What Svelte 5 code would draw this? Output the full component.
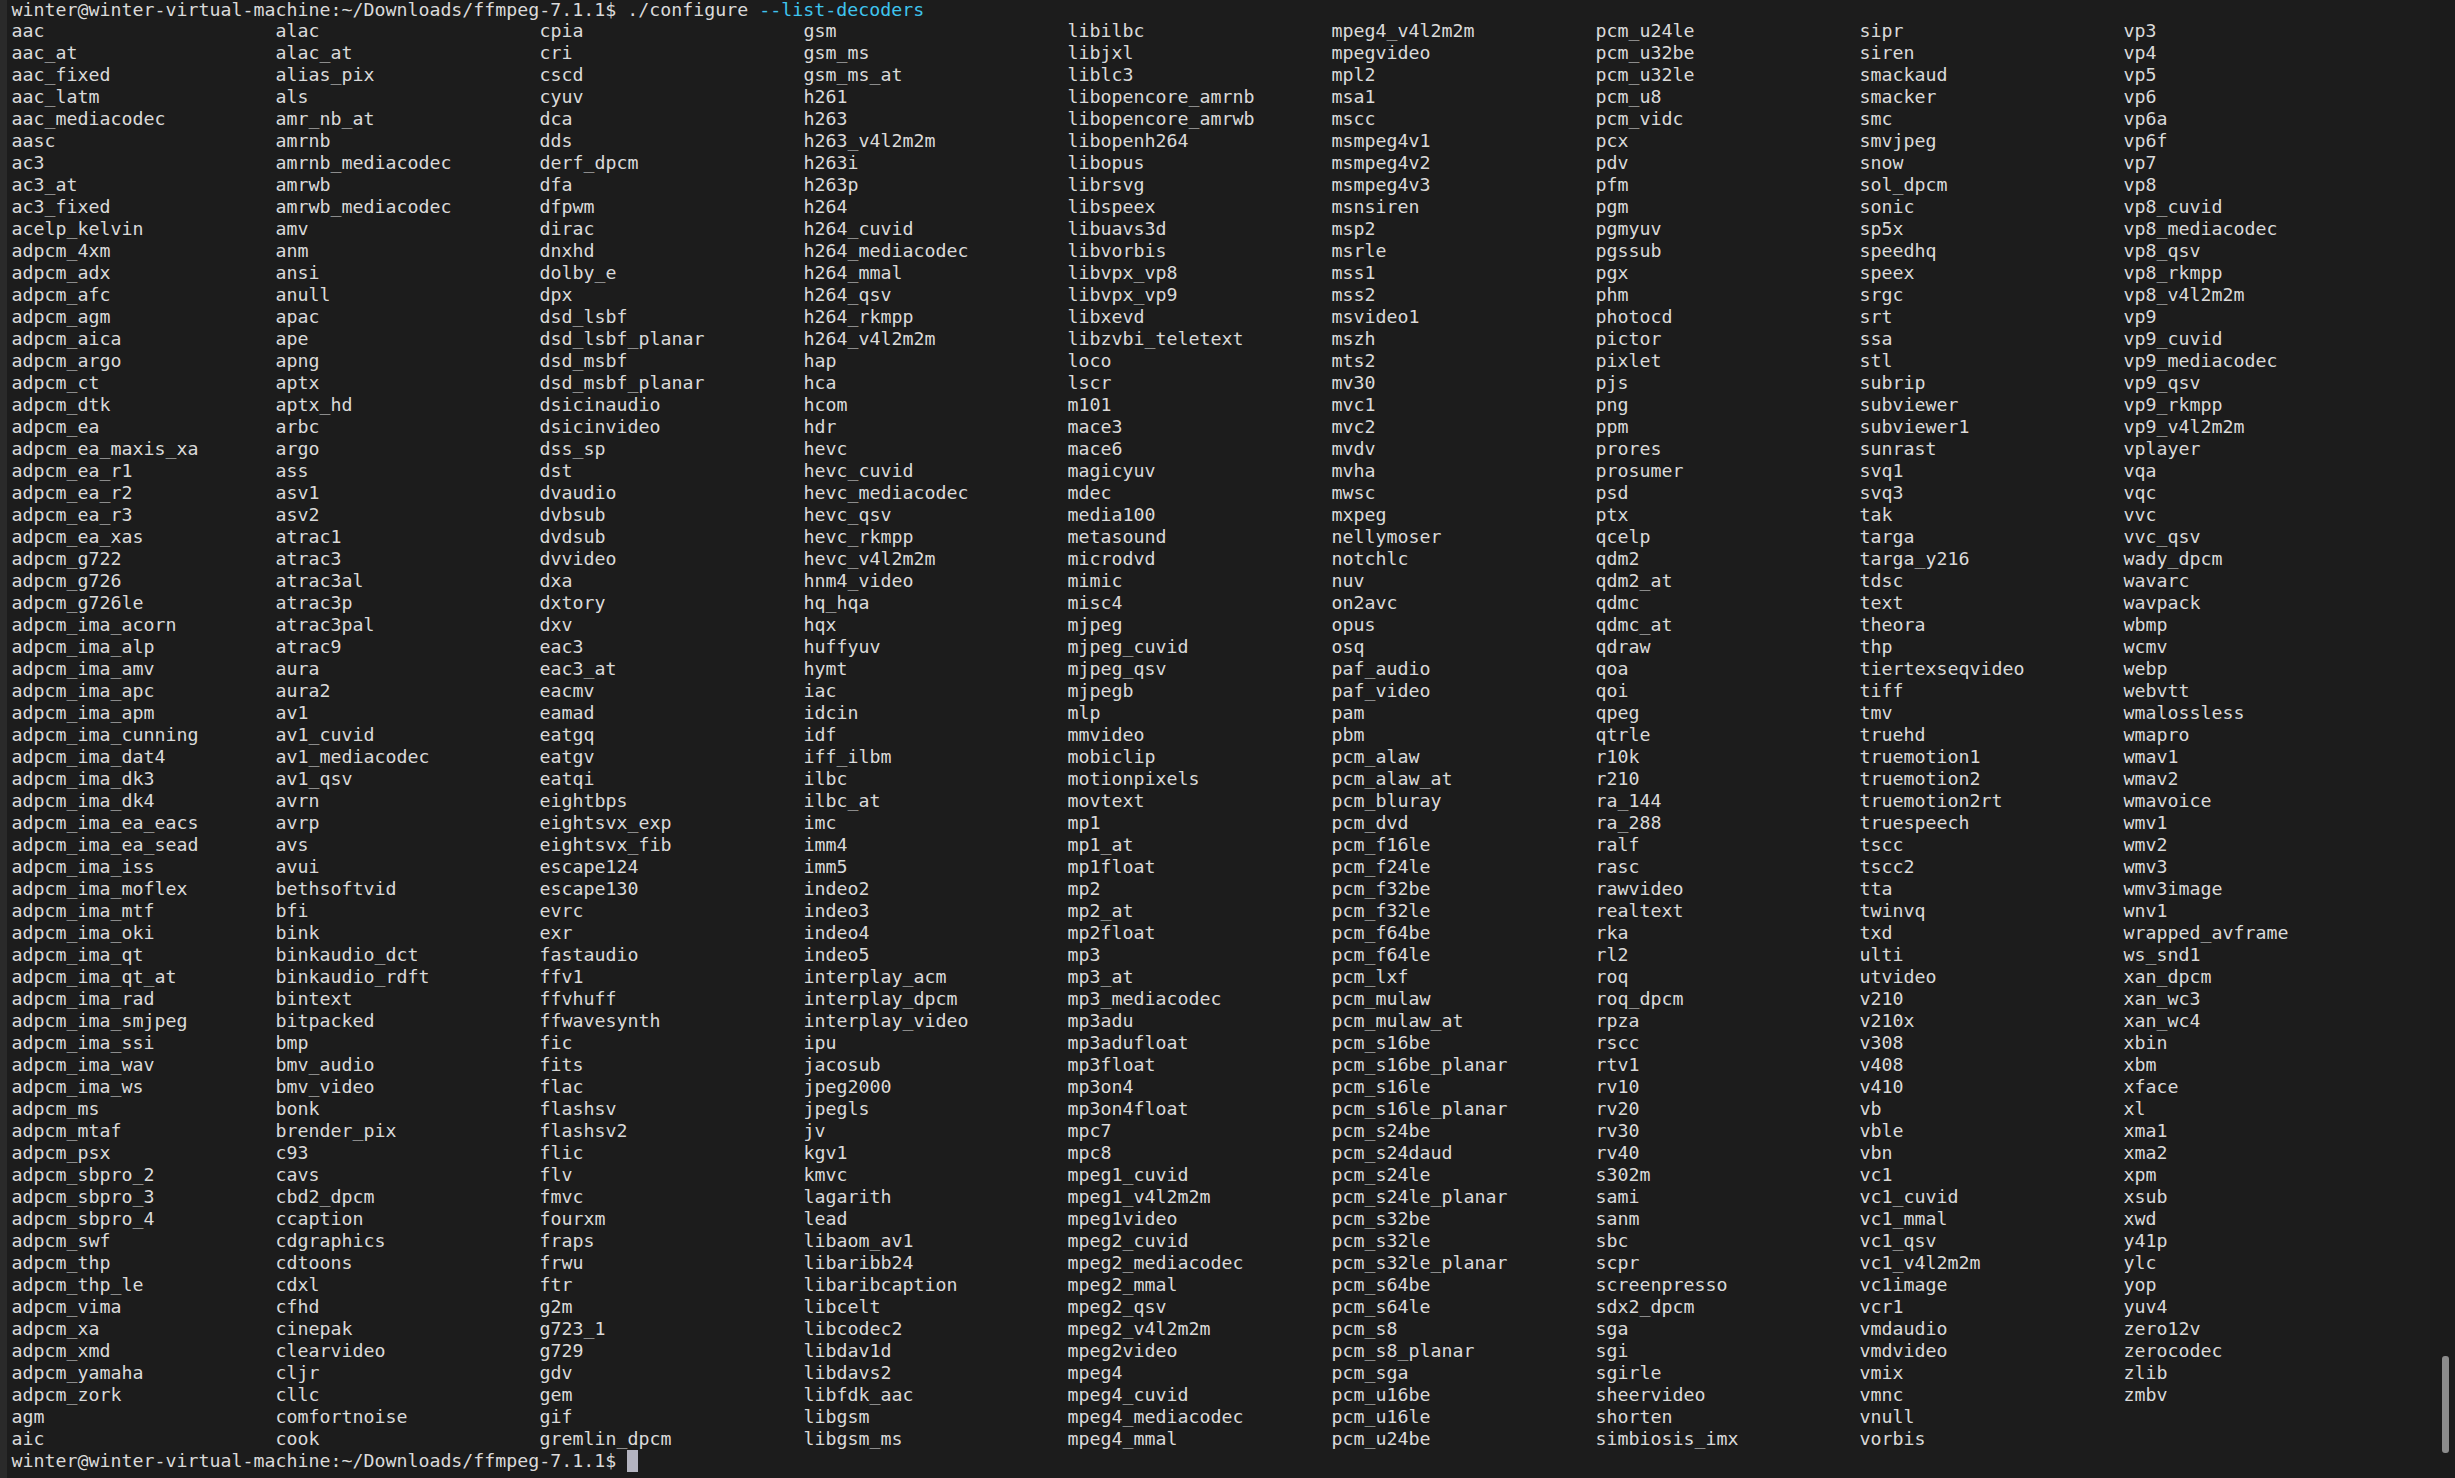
<script>
  // ./configure --list-decoders output, column by column like the terminal prints it
  const columns = [
    'aac aac_at aac_fixed aac_latm aac_mediacodec aasc ac3 ac3_at ac3_fixed acelp_kelvin adpcm_4xm adpcm_adx adpcm_afc adpcm_agm adpcm_aica adpcm_argo adpcm_ct adpcm_dtk adpcm_ea adpcm_ea_maxis_xa adpcm_ea_r1 adpcm_ea_r2 adpcm_ea_r3 adpcm_ea_xas adpcm_g722 adpcm_g726 adpcm_g726le adpcm_ima_acorn adpcm_ima_alp adpcm_ima_amv adpcm_ima_apc adpcm_ima_apm adpcm_ima_cunning adpcm_ima_dat4 adpcm_ima_dk3 adpcm_ima_dk4 adpcm_ima_ea_eacs adpcm_ima_ea_sead adpcm_ima_iss adpcm_ima_moflex adpcm_ima_mtf adpcm_ima_oki adpcm_ima_qt adpcm_ima_qt_at adpcm_ima_rad adpcm_ima_smjpeg adpcm_ima_ssi adpcm_ima_wav adpcm_ima_ws adpcm_ms adpcm_mtaf adpcm_psx adpcm_sbpro_2 adpcm_sbpro_3 adpcm_sbpro_4 adpcm_swf adpcm_thp adpcm_thp_le adpcm_vima adpcm_xa adpcm_xmd adpcm_yamaha adpcm_zork agm aic',
    'alac alac_at alias_pix als amr_nb_at amrnb amrnb_mediacodec amrwb amrwb_mediacodec amv anm ansi anull apac ape apng aptx aptx_hd arbc argo ass asv1 asv2 atrac1 atrac3 atrac3al atrac3p atrac3pal atrac9 aura aura2 av1 av1_cuvid av1_mediacodec av1_qsv avrn avrp avs avui bethsoftvid bfi bink binkaudio_dct binkaudio_rdft bintext bitpacked bmp bmv_audio bmv_video bonk brender_pix c93 cavs cbd2_dpcm ccaption cdgraphics cdtoons cdxl cfhd cinepak clearvideo cljr cllc comfortnoise cook',
    'cpia cri cscd cyuv dca dds derf_dpcm dfa dfpwm dirac dnxhd dolby_e dpx dsd_lsbf dsd_lsbf_planar dsd_msbf dsd_msbf_planar dsicinaudio dsicinvideo dss_sp dst dvaudio dvbsub dvdsub dvvideo dxa dxtory dxv eac3 eac3_at eacmv eamad eatgq eatgv eatqi eightbps eightsvx_exp eightsvx_fib escape124 escape130 evrc exr fastaudio ffv1 ffvhuff ffwavesynth fic fits flac flashsv flashsv2 flic flv fmvc fourxm fraps frwu ftr g2m g723_1 g729 gdv gem gif gremlin_dpcm',
    'gsm gsm_ms gsm_ms_at h261 h263 h263_v4l2m2m h263i h263p h264 h264_cuvid h264_mediacodec h264_mmal h264_qsv h264_rkmpp h264_v4l2m2m hap hca hcom hdr hevc hevc_cuvid hevc_mediacodec hevc_qsv hevc_rkmpp hevc_v4l2m2m hnm4_video hq_hqa hqx huffyuv hymt iac idcin idf iff_ilbm ilbc ilbc_at imc imm4 imm5 indeo2 indeo3 indeo4 indeo5 interplay_acm interplay_dpcm interplay_video ipu jacosub jpeg2000 jpegls jv kgv1 kmvc lagarith lead libaom_av1 libaribb24 libaribcaption libcelt libcodec2 libdav1d libdavs2 libfdk_aac libgsm libgsm_ms',
    'libilbc libjxl liblc3 libopencore_amrnb libopencore_amrwb libopenh264 libopus librsvg libspeex libuavs3d libvorbis libvpx_vp8 libvpx_vp9 libxevd libzvbi_teletext loco lscr m101 mace3 mace6 magicyuv mdec media100 metasound microdvd mimic misc4 mjpeg mjpeg_cuvid mjpeg_qsv mjpegb mlp mmvideo mobiclip motionpixels movtext mp1 mp1_at mp1float mp2 mp2_at mp2float mp3 mp3_at mp3_mediacodec mp3adu mp3adufloat mp3float mp3on4 mp3on4float mpc7 mpc8 mpeg1_cuvid mpeg1_v4l2m2m mpeg1video mpeg2_cuvid mpeg2_mediacodec mpeg2_mmal mpeg2_qsv mpeg2_v4l2m2m mpeg2video mpeg4 mpeg4_cuvid mpeg4_mediacodec mpeg4_mmal',
    'mpeg4_v4l2m2m mpegvideo mpl2 msa1 mscc msmpeg4v1 msmpeg4v2 msmpeg4v3 msnsiren msp2 msrle mss1 mss2 msvideo1 mszh mts2 mv30 mvc1 mvc2 mvdv mvha mwsc mxpeg nellymoser notchlc nuv on2avc opus osq paf_audio paf_video pam pbm pcm_alaw pcm_alaw_at pcm_bluray pcm_dvd pcm_f16le pcm_f24le pcm_f32be pcm_f32le pcm_f64be pcm_f64le pcm_lxf pcm_mulaw pcm_mulaw_at pcm_s16be pcm_s16be_planar pcm_s16le pcm_s16le_planar pcm_s24be pcm_s24daud pcm_s24le pcm_s24le_planar pcm_s32be pcm_s32le pcm_s32le_planar pcm_s64be pcm_s64le pcm_s8 pcm_s8_planar pcm_sga pcm_u16be pcm_u16le pcm_u24be',
    'pcm_u24le pcm_u32be pcm_u32le pcm_u8 pcm_vidc pcx pdv pfm pgm pgmyuv pgssub pgx phm photocd pictor pixlet pjs png ppm prores prosumer psd ptx qcelp qdm2 qdm2_at qdmc qdmc_at qdraw qoa qoi qpeg qtrle r10k r210 ra_144 ra_288 ralf rasc rawvideo realtext rka rl2 roq roq_dpcm rpza rscc rtv1 rv10 rv20 rv30 rv40 s302m sami sanm sbc scpr screenpresso sdx2_dpcm sga sgi sgirle sheervideo shorten simbiosis_imx',
    'sipr siren smackaud smacker smc smvjpeg snow sol_dpcm sonic sp5x speedhq speex srgc srt ssa stl subrip subviewer subviewer1 sunrast svq1 svq3 tak targa targa_y216 tdsc text theora thp tiertexseqvideo tiff tmv truehd truemotion1 truemotion2 truemotion2rt truespeech tscc tscc2 tta twinvq txd ulti utvideo v210 v210x v308 v408 v410 vb vble vbn vc1 vc1_cuvid vc1_mmal vc1_qsv vc1_v4l2m2m vc1image vcr1 vmdaudio vmdvideo vmix vmnc vnull vorbis',
    'vp3 vp4 vp5 vp6 vp6a vp6f vp7 vp8 vp8_cuvid vp8_mediacodec vp8_qsv vp8_rkmpp vp8_v4l2m2m vp9 vp9_cuvid vp9_mediacodec vp9_qsv vp9_rkmpp vp9_v4l2m2m vplayer vqa vqc vvc vvc_qsv wady_dpcm wavarc wavpack wbmp wcmv webp webvtt wmalossless wmapro wmav1 wmav2 wmavoice wmv1 wmv2 wmv3 wmv3image wnv1 wrapped_avframe ws_snd1 xan_dpcm xan_wc3 xan_wc4 xbin xbm xface xl xma1 xma2 xpm xsub xwd y41p ylc yop yuv4 zero12v zerocodec zlib zmbv'
  ].map((c) => c.split(' '));

  const prompt = 'winter@winter-virtual-machine:~/Downloads/ffmpeg-7.1.1$';
</script>

<div class="terminal">
  <div class="gutter"></div>
  <div class="output">
    <div class="line">{prompt} ./configure <span class="flag">--list-decoders</span></div>
    <div class="listing">
      {#each columns as col}
        <div class="col">
          {#each col as name}
            <div class="line">{name}</div>
          {/each}
        </div>
      {/each}
    </div>
    <div class="line">{prompt} <span class="cursor"></span></div>
  </div>
  <div class="scrollbar">
    <div class="thumb"></div>
  </div>
</div>

<style>
  :global(body) {
    background: #1c1c1c;
  }

  .terminal {
    display: flex;
    height: 1478px;
    overflow: hidden;
    background: #1c1c1c;
    color: #dadada;
    font-family: "DejaVu Sans Mono", monospace;
    font-size: 18.272px;
  }

  .gutter {
    width: 7px;
    background: #2a2a2a;
  }

  .output {
    flex: 1;
    padding-left: 4.5px;
  }

  .line {
    height: 22px;
    line-height: 22px;
    white-space: pre;
  }

  .line:first-child {
    height: 20px;
    line-height: 20px;
  }

  .listing {
    display: flex;
  }

  .listing .line:first-child {
    height: 22px;
    line-height: 22px;
  }

  .col {
    width: 264px;
  }

  .flag {
    color: #3fc4ee;
  }

  .cursor {
    display: inline-block;
    width: 11px;
    height: 22px;
    vertical-align: top;
    background: #b4b4c0;
  }

  .scrollbar {
    width: 25px;
    padding: 1356px 6px 0 12px;
    box-sizing: border-box;
    background: #1b1b1b;
  }

  .thumb {
    width: 7px;
    height: 97px;
    border-radius: 3px;
    background: #8c8c8c;
  }
</style>
